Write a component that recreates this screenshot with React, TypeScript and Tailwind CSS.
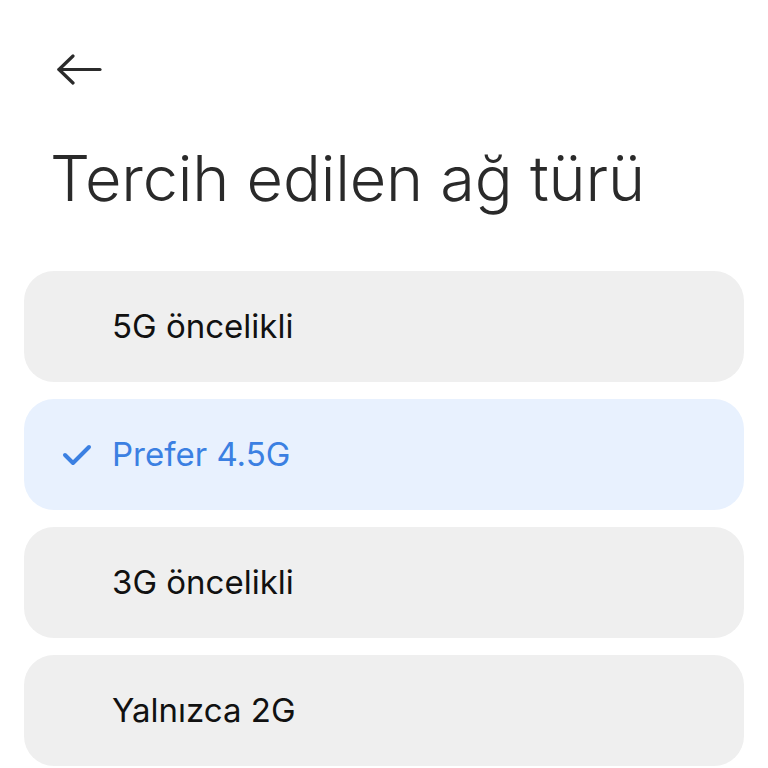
import { useState } from 'react'

const options = ['5G öncelikli', 'Prefer 4.5G', '3G öncelikli', 'Yalnızca 2G']

export default function App() {
  const [selected, setSelected] = useState(1)

  return (
    <div className="w-full h-[768px] bg-white flex flex-col overflow-hidden font-['Inter',sans-serif]">
      <div className="pt-[54px] pl-[56px] h-[88px]">
        <svg width="48" height="32" viewBox="0 0 48 32" fill="none" stroke="#2b2b2b" strokeWidth="3.2" strokeLinecap="round" strokeLinejoin="round">
          <path d="M3 15.5 H44" />
          <path d="M17 2 L3 15.5 L17 29" />
        </svg>
      </div>
      <h1 className="pl-[50px] mt-[50px] text-[63px] leading-[80px] font-light text-[#2a2a2a] tracking-[-0.2px]">Tercih edilen ağ türü</h1>
      <div className="mt-[53px] px-[24px] flex flex-col gap-[17px]">
        {options.map((label, i) => {
          const active = i === selected
          return (
            <button
              key={label}
              onClick={() => setSelected(i)}
              className={`h-[111px] w-full rounded-[30px] flex items-center text-left ${active ? 'bg-[#e8f1fe]' : 'bg-[#efefef]'}`}
            >
              <span className="w-[88px] flex justify-end pr-[20px]">
                {active && (
                  <svg width="30" height="24" viewBox="0 0 30 24" fill="none" stroke="#3b80e2" strokeWidth="4" strokeLinecap="round" strokeLinejoin="round">
                    <path d="M3 12 L11 20 L27 4" />
                  </svg>
                )}
              </span>
              <span className={`text-[33px] ${active ? 'text-[#3b80e2]' : 'text-[#111111]'}`}>{label}</span>
            </button>
          )
        })}
      </div>
    </div>
  )
}
